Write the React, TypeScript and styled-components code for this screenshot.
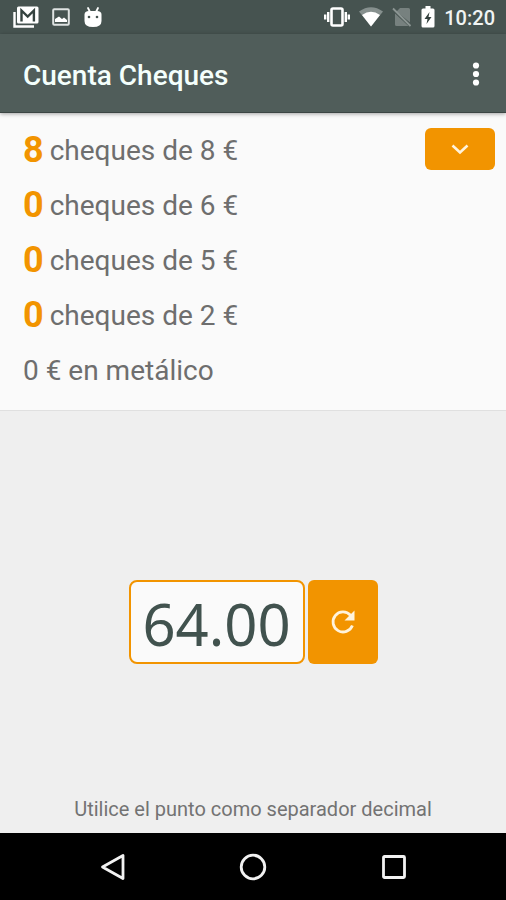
import React, { useState } from "react";
import styled, { createGlobalStyle } from "styled-components";

const GlobalStyle = createGlobalStyle`
  * { box-sizing: border-box; }
  body {
    margin: 0;
    font-family: Roboto, "Liberation Sans", sans-serif;
    background: #efefef;
  }
`;

const orange = "#f29400";

const Screen = styled.div`
  min-height: 100vh;
  display: flex;
  flex-direction: column;
  background: #efefef;
`;

const StatusBar = styled.div`
  height: 34px;
  padding: 0 11px 0 13px;
  display: flex;
  align-items: center;
  justify-content: space-between;
  background: #465350;
  color: #fff;
`;

const StatusGroup = styled.div<{ $gap: number }>`
  display: flex;
  align-items: center;
  gap: ${(p) => p.$gap}px;
`;

const Clock = styled.span`
  font-size: 20px;
  line-height: 24px;
  font-weight: 500;
  color: #f1f4f3;
  padding-top: 2px;
`;

const AppBar = styled.header`
  position: relative;
  height: 79px;
  padding: 4px 18px 0 23px;
  display: flex;
  align-items: center;
  justify-content: space-between;
  background: #505d5a;
  border-bottom: 1px solid #3c4644;
  box-shadow: 0 1px 4px rgba(0, 0, 0, 0.35);
`;

const Title = styled.h1`
  margin: 0;
  padding-top: 1px;
  font-size: 28px;
  line-height: 32px;
  font-weight: 500;
  color: #f4fffc;
`;

const IconButton = styled.button`
  border: 0;
  padding: 0;
  background: none;
  color: #fff;
  display: flex;
  align-items: center;
  justify-content: center;
  cursor: pointer;
`;

const Summary = styled.section`
  display: flex;
  align-items: flex-start;
  justify-content: space-between;
  padding: 10px 11px 12px 23px;
  background: #fafafa;
  border-bottom: 1px solid #e0e0e0;
`;

const Lines = styled.ul`
  list-style: none;
  margin: 0;
  padding: 0;
`;

const Line = styled.li`
  height: 55px;
  display: flex;
  align-items: center;
  gap: 6px;
  font-size: 28px;
  line-height: 55px;
  color: #6e6e6e;
`;

const Count = styled.strong`
  font-size: 36px;
  font-weight: 700;
  color: ${orange};
`;

const OrangeButton = styled(IconButton)<{ $height: number }>`
  width: 70px;
  height: ${(p) => p.$height}px;
  border-radius: 6px;
  background: ${orange};
  color: #fff3dc;
`;

const ToggleSlot = styled.div`
  padding-top: 5px;
`;

const Entry = styled.main`
  flex: 1;
  display: grid;
  grid-template-rows: 1fr auto 1fr;
  justify-items: center;
`;

const AmountForm = styled.form`
  grid-row: 2;
  display: flex;
  gap: 3px;
`;

const AmountInput = styled.input`
  width: 176px;
  height: 84px;
  padding: 2px 0 0;
  border: 2px solid ${orange};
  border-radius: 8px;
  background: #fafafa;
  color: #41524e;
  font-family: "Noto Sans", "Open Sans", sans-serif;
  font-size: 58px;
  text-align: center;
  outline: none;
`;

const Hint = styled.p`
  grid-row: 3;
  align-self: end;
  margin: 0 0 12px;
  font-size: 20px;
  line-height: 24px;
  color: #737373;
`;

const NavBar = styled.nav`
  height: 67px;
  display: grid;
  grid-template-columns: repeat(3, 141px);
  justify-content: center;
  background: #000;
`;

const MailIcon = () => (
  <svg width="26" height="22" viewBox="0 0 26 22">
    <path d="M1.500 6v14.500H21" fill="none" stroke="#fff" strokeWidth="2.400" />
    <rect x="4" y="0.500" width="21.500" height="17" rx="1.500" fill="#fff" />
    <path d="M8.500 15.500V4.500l6.200 6 6.200-6v11" fill="none" stroke="#34423f" strokeWidth="2.400" />
  </svg>
);

const ImageIcon = () => (
  <svg width="18" height="18" viewBox="0 0 18 18">
    <rect x="1.2" y="1.2" width="15.6" height="15.6" rx="1" fill="none" stroke="#dfe3e2" strokeWidth="2" />
    <path d="M3 14v-3l4-2.5 3 2.5 2-1.5 3 2.5v2z" fill="#fff" />
  </svg>
);

const RobotIcon = () => (
  <svg width="20" height="22" viewBox="0 0 20 22">
    <path d="M5 2l2 4M15 2l-2 4" stroke="#fff" strokeWidth="1.8" strokeLinecap="round" />
    <path d="M1.500 8.500Q1.500 5 6 5h8q4.500 0 4.500 3.500V15q0 6-8.500 6t-8.500-6z" fill="#fff" />
    <circle cx="6" cy="11" r="1.300" fill="#465350" />
    <circle cx="14" cy="11" r="1.300" fill="#465350" />
  </svg>
);

const VibrateIcon = () => (
  <svg width="26" height="20" viewBox="0 0 26 20">
    <rect x="7.500" y="1.500" width="11" height="17" rx="1.500" fill="none" stroke="#fff" strokeWidth="2.600" />
    <path d="M4.200 5v10M21.800 5v10M1.200 7.500v5M24.800 7.500v5" stroke="#fff" strokeWidth="2.400" />
  </svg>
);

const WifiIcon = () => (
  <svg width="24" height="20" viewBox="0 0 24 20">
    <path d="M12 19.500L0 4.500Q12-4 24 4.500z" fill="#86908e" />
    <path d="M12 19.500L3 8Q12 1.500 21 8z" fill="#fff" />
  </svg>
);

const NoSimIcon = () => (
  <svg width="20" height="20" viewBox="0 0 20 20">
    <path d="M8 1h8.500q1.500 0 1.500 1.500v13L4.500 4.500zM3 6.500L16.500 19h-12Q3 19 3 17.500z" fill="#77817f" />
    <path d="M1 1.500l17.500 17.500" stroke="#8d9694" strokeWidth="1.800" />
  </svg>
);

const BatteryIcon = () => (
  <svg width="14" height="22" viewBox="0 0 14 22">
    <path d="M4.500 0h5v2.500H12q1.500 0 1.500 1.500v16q0 1.500-1.500 1.500H2Q.500 21.500.500 20V4q0-1.500 1.500-1.500h2.500z" fill="#fff" />
    <path d="M8.500 6L3.500 13h3L5.500 18l5-7h-3z" fill="#33403d" />
  </svg>
);

const MoreIcon = () => (
  <svg width="24" height="26" viewBox="0 0 24 26">
    <circle cx="12" cy="3.500" r="3.100" fill="#fff" />
    <circle cx="12" cy="12" r="3.100" fill="#fff" />
    <circle cx="12" cy="20.500" r="3.100" fill="#fff" />
  </svg>
);

const ChevronIcon = ({ up }: { up: boolean }) => (
  <svg width="20" height="14" viewBox="0 0 20 14">
    <path
      d={up ? "M2.500 10.500l7.500-7 7.500 7" : "M2.500 3.500l7.500 7 7.500-7"}
      fill="none"
      stroke="currentColor"
      strokeWidth="2.600"
    />
  </svg>
);

const ReloadIcon = () => (
  <svg width="28" height="28" viewBox="0 0 28 28">
    <path d="M23.400 17.500A10 10 0 1 1 21.500 7.300" fill="none" stroke="currentColor" strokeWidth="2.800" />
    <path d="M25.500 2.500v10h-10z" fill="currentColor" />
  </svg>
);

const BackIcon = () => (
  <svg width="26" height="28" viewBox="0 0 26 28">
    <path d="M24 2.500v23L3.500 14z" fill="none" stroke="#f2f2f2" strokeWidth="2.800" strokeLinejoin="round" />
  </svg>
);

const HomeIcon = () => (
  <svg width="28" height="28" viewBox="0 0 28 28">
    <circle cx="14" cy="14" r="11.800" fill="none" stroke="#f2f2f2" strokeWidth="2.800" />
  </svg>
);

const RecentIcon = () => (
  <svg width="26" height="26" viewBox="0 0 26 26">
    <rect x="2.500" y="2.500" width="21" height="21" rx="1" fill="none" stroke="#f2f2f2" strokeWidth="2.800" />
  </svg>
);

const vouchers = [
  { count: 8, value: 8 },
  { count: 0, value: 6 },
  { count: 0, value: 5 },
  { count: 0, value: 2 },
];

export default function App() {
  const [amount, setAmount] = useState("64.00");
  const [open, setOpen] = useState(true);

  return (
    <Screen>
      <GlobalStyle />
      <StatusBar>
        <StatusGroup $gap={13}>
          <MailIcon />
          <ImageIcon />
          <RobotIcon />
        </StatusGroup>
        <StatusGroup $gap={9}>
          <VibrateIcon />
          <WifiIcon />
          <NoSimIcon />
          <BatteryIcon />
          <Clock>10:20</Clock>
        </StatusGroup>
      </StatusBar>
      <AppBar>
        <Title>Cuenta Cheques</Title>
        <IconButton type="button" aria-label="Más opciones">
          <MoreIcon />
        </IconButton>
      </AppBar>
      <Summary>
        <Lines>
          {(open ? vouchers : vouchers.slice(0, 1)).map((v) => (
            <Line key={v.value}>
              <Count>{v.count}</Count>
              <span>cheques de {v.value} €</span>
            </Line>
          ))}
          <Line>0 € en metálico</Line>
        </Lines>
        <ToggleSlot>
          <OrangeButton
            type="button"
            $height={42}
            aria-label="Desplegar"
            aria-expanded={open}
            onClick={() => setOpen(!open)}
          >
            <ChevronIcon up={!open} />
          </OrangeButton>
        </ToggleSlot>
      </Summary>
      <Entry>
        <AmountForm onSubmit={(e) => e.preventDefault()}>
          <AmountInput
            aria-label="Importe"
            inputMode="decimal"
            value={amount}
            onChange={(e) => setAmount(e.target.value)}
          />
          <OrangeButton type="submit" $height={84} aria-label="Recalcular">
            <ReloadIcon />
          </OrangeButton>
        </AmountForm>
        <Hint>Utilice el punto como separador decimal</Hint>
      </Entry>
      <NavBar>
        <IconButton type="button" aria-label="Atrás">
          <BackIcon />
        </IconButton>
        <IconButton type="button" aria-label="Inicio">
          <HomeIcon />
        </IconButton>
        <IconButton type="button" aria-label="Recientes">
          <RecentIcon />
        </IconButton>
      </NavBar>
    </Screen>
  );
}
